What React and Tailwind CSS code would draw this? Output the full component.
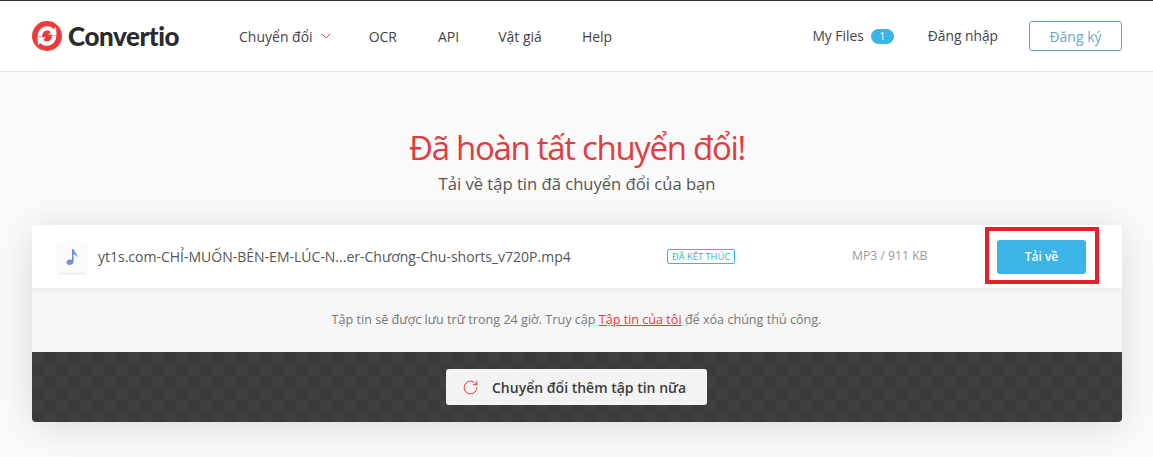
import { ChevronDown, RotateCw } from "lucide-react";

function Logo() {
  return (
    <div className="flex items-center gap-[6px]">
      <svg width="30" height="30" viewBox="0 0 30 30">
        <circle cx="15" cy="15" r="15" fill="#ee3a3d" />
        <path d="M5.800 15.500 C5.300 10 10 5.200 15 5.200 C18 5.200 20.200 6.500 21.700 8.100 L24 5.800 L24.600 14.200 L16.300 13.600 L18.700 11.200 C17.700 10 16.500 9.600 15 9.600 C12.300 9.600 9.900 12 10.300 15.500 Z" fill="#fff" />
        <path d="M24.200 14.500 C24.700 20 20 24.800 15 24.800 C12 24.800 9.800 23.500 8.300 21.900 L6 24.200 L5.400 15.800 L13.700 16.400 L11.300 18.800 C12.300 20 13.500 20.400 15 20.400 C17.700 20.400 20.100 18 19.700 14.500 Z" fill="#fff" />
      </svg>
      <span className="font-['Lato',sans-serif] text-[26px] leading-none font-black tracking-[-0.45px] text-[#2b2b2b]">Convertio</span>
    </div>
  );
}

function Header() {
  return (
    <header className="flex h-[72px] items-center border-t border-b border-t-[#333] border-b-[#e6e6e6] bg-white pr-[31px] pl-[32px] text-[14px] text-[#444]">
      <Logo />
      <nav className="ml-[60px] flex items-center">
        <span className="flex items-center gap-[5px]">
          Chuyển đổi
          <ChevronDown size={16} strokeWidth={1.5} className="text-[#e0474a]" />
        </span>
        <span className="ml-[35px]">OCR</span>
        <span className="ml-[41px]">API</span>
        <span className="ml-[39px]">Vật giá</span>
        <span className="ml-[40px]">Help</span>
      </nav>
      <div className="ml-auto flex items-center">
        <span className="text-[13.8px]">My Files</span>
        <span className="ml-[7px] flex h-[15px] w-[23px] items-center justify-center rounded-full bg-[#3db4e8] text-[10px] text-white">1</span>
        <span className="ml-[34px] text-[13.8px]">Đăng nhập</span>
        <button className="ml-[31px] h-[30px] w-[93px] rounded-[3px] border border-[#5aa6bd] text-[#6fa6c8]">Đăng ký</button>
      </div>
    </header>
  );
}

function FileRow() {
  return (
    <div className="relative flex h-[63px] items-center bg-white pl-[26px] shadow-[0_2px_6px_rgba(0,0,0,0.06)]">
      <div className="flex h-[32px] w-[28px] items-center justify-center rounded-[3px] bg-[#fafafa] shadow-[0_1px_2px_rgba(0,0,0,0.12)]">
        <svg width="14" height="18" viewBox="0 0 14 18">
          <path d="M7 1 L8.600 1 C8.900 4 12.500 5.500 12.500 9.500 C11.500 7.500 10 6.500 8.600 6.300 L8.600 13.500 C8.600 15.500 6.700 17 4.600 17 C2.700 17 1.500 16 1.500 14.600 C1.500 12.900 3.300 11.600 5.200 11.600 C5.900 11.600 6.500 11.700 7 12 Z" fill="#6f8fd8" />
        </svg>
      </div>
      <span className="ml-[12px] w-[569px] text-[14px] whitespace-nowrap text-[#555]">yt1s.com-CHỈ-MUỐN-BÊN-EM-LÚC-N...er-Chương-Chu-shorts_v720P.mp4</span>
      <span className="rounded-[2px] border border-[#3db4d8] px-[4px] text-[9.3px] leading-[13px] whitespace-nowrap text-[#4aa8c8]">ĐÃ KẾT THÚC</span>
      <span className="ml-auto w-[75px] text-[12.2px] whitespace-nowrap text-[#999]">MP3 / 911 KB</span>
      <button className="mr-[36px] ml-[70px] h-[34px] w-[89px] rounded-[3px] bg-[#3db4e8] text-[12px] font-semibold text-white">Tải về</button>
      {/* red annotation box drawn over the screenshot */}
      <div className="absolute top-[2px] left-[953px] h-[57px] w-[114px] border-[4px] border-[#e3202b]" />
    </div>
  );
}

export default function App() {
  return (
    <div className="h-[457px] overflow-hidden bg-[#fafafa] font-['Open_Sans',sans-serif]">
      <Header />
      <main className="pt-[53px] pr-[31px] pl-[32px]">
        <h1 className="text-center text-[33px] leading-[46px] tracking-[-1.3px] text-[#e23c40]">Đã hoàn tất chuyển đổi!</h1>
        <p className="mt-[1px] text-center text-[16.6px] leading-[24px] text-[#555]">Tải về tập tin đã chuyển đổi của bạn</p>
        <section className="mt-[29px] overflow-hidden rounded-[4px] shadow-[0_4px_40px_rgba(0,0,0,0.13)]">
          <FileRow />
          <div className="flex h-[64px] items-center justify-center bg-[#f6f6f6] pr-[1px] text-[12.6px] text-[#777]">
            <span>
              Tập tin sẽ được lưu trữ trong 24 giờ. Truy cập <span className="text-[#e8363a] underline">Tập tin của tôi</span> để xóa chúng thủ công.
            </span>
          </div>
          <div className="flex h-[70px] items-center justify-center bg-[repeating-conic-gradient(#3b3b3b_0_25%,#404040_0_50%)] bg-[length:24px_24px] pr-[1px]">
            <button className="flex h-[36px] w-[261px] items-center rounded-[3px] bg-[#f3f3f3] pl-[16px] text-[14px] font-semibold text-[#3c3c3c]">
              <RotateCw size={17} strokeWidth={1.4} className="text-[#d9403f]" />
              <span className="ml-[13px]">Chuyển đổi thêm tập tin nữa</span>
            </button>
          </div>
        </section>
      </main>
    </div>
  );
}
